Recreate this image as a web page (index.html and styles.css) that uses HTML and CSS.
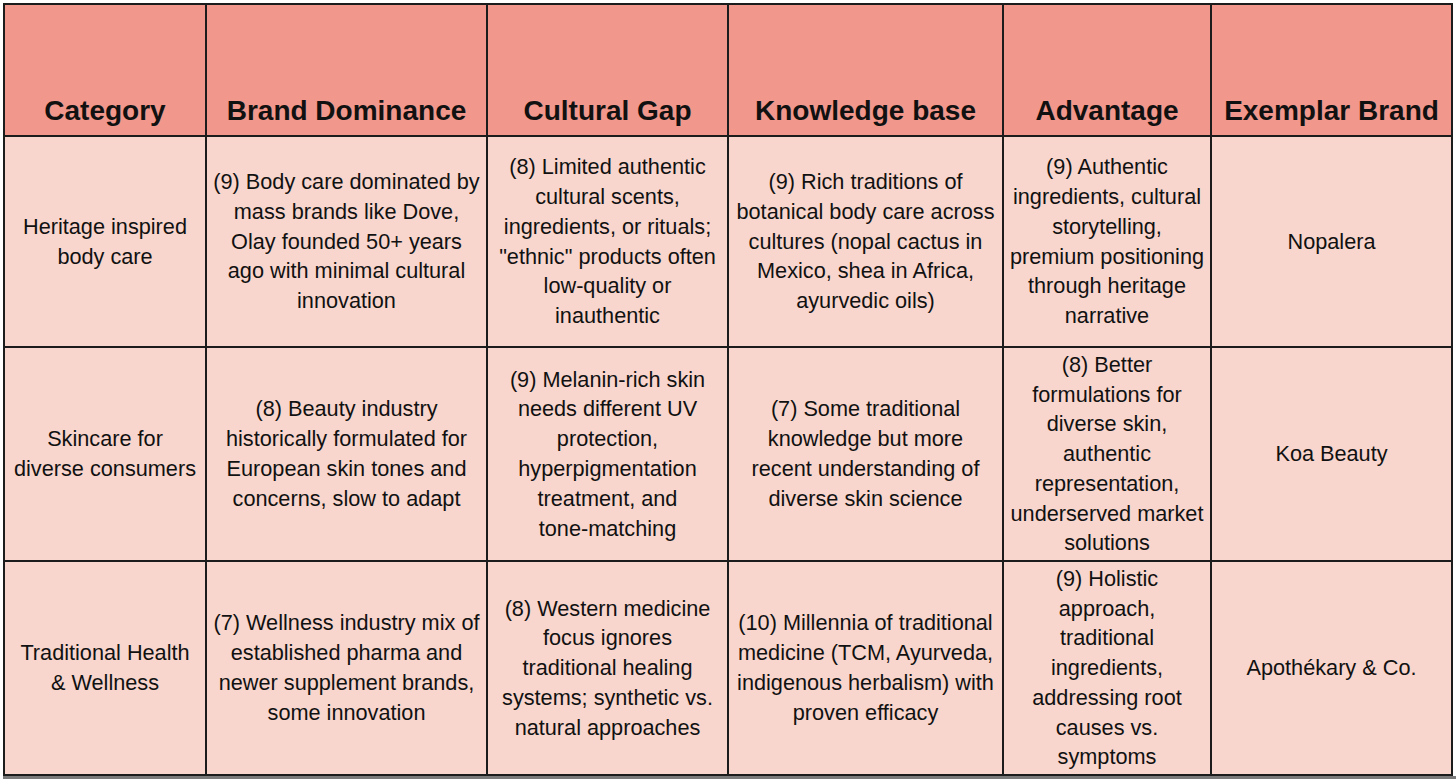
FILE: index.html
```html
<!DOCTYPE html>
<html>
<head>
<meta charset="utf-8">
<link rel="stylesheet" href="styles.css">
</head>
<body>
<div class="wrap">
<table class="grid">
<colgroup>
<col class="c1"><col class="c2"><col class="c3"><col class="c4"><col class="c5"><col class="c6">
</colgroup>
<thead>
<tr class="head">
<th>Category</th>
<th>Brand Dominance</th>
<th>Cultural Gap</th>
<th>Knowledge base</th>
<th>Advantage</th>
<th>Exemplar Brand</th>
</tr>
</thead>
<tbody>
<tr class="r1">
<td>Heritage inspired<br>body care</td>
<td>(9) Body care dominated by<br>mass brands like Dove,<br>Olay founded 50+ years<br>ago with minimal cultural<br>innovation</td>
<td>(8) Limited authentic<br>cultural scents,<br>ingredients, or rituals;<br>"ethnic" products often<br>low-quality or<br>inauthentic</td>
<td>(9) Rich traditions of<br>botanical body care across<br>cultures (nopal cactus in<br>Mexico, shea in Africa,<br>ayurvedic oils)</td>
<td>(9) Authentic<br>ingredients, cultural<br>storytelling,<br>premium positioning<br>through heritage<br>narrative</td>
<td>Nopalera</td>
</tr>
<tr class="r2">
<td>Skincare for<br>diverse consumers</td>
<td>(8) Beauty industry<br>historically formulated for<br>European skin tones and<br>concerns, slow to adapt</td>
<td>(9) Melanin-rich skin<br>needs different UV<br>protection,<br>hyperpigmentation<br>treatment, and<br>tone-matching</td>
<td>(7) Some traditional<br>knowledge but more<br>recent understanding of<br>diverse skin science</td>
<td>(8) Better<br>formulations for<br>diverse skin,<br>authentic<br>representation,<br>underserved market<br>solutions</td>
<td>Koa Beauty</td>
</tr>
<tr class="r3">
<td>Traditional Health<br>&amp; Wellness</td>
<td>(7) Wellness industry mix of<br>established pharma and<br>newer supplement brands,<br>some innovation</td>
<td>(8) Western medicine<br>focus ignores<br>traditional healing<br>systems; synthetic vs.<br>natural approaches</td>
<td>(10) Millennia of traditional<br>medicine (TCM, Ayurveda,<br>indigenous herbalism) with<br>proven efficacy</td>
<td>(9) Holistic<br>approach,<br>traditional<br>ingredients,<br>addressing root<br>causes vs.<br>symptoms</td>
<td>Apothékary &amp; Co.</td>
</tr>
</tbody>
</table>
<div class="bottom-rule"></div>
</div>
</body>
</html>
```
FILE: styles.css
```css
html, body {
  margin: 0;
  padding: 0;
  background: #ffffff;
}
.wrap {
  padding: 3px 0 0 3px;
}
.grid {
  table-layout: fixed;
  border-collapse: separate;
  border-spacing: 0;
  width: 1450px;
  border-left: 2px solid #1c1c1c;
  border-top: 2px solid #1c1c1c;
  font-family: "Liberation Sans", Arial, sans-serif;
  color: #111;
}
.c1 { width: 202px; }
.c2 { width: 281px; }
.c3 { width: 241px; }
.c4 { width: 275px; }
.c5 { width: 208px; }
.c6 { width: 241px; }
.grid th, .grid td {
  box-sizing: border-box;
  border-right: 2px solid #1c1c1c;
  border-bottom: 2px solid #1c1c1c;
  text-align: center;
  white-space: nowrap;
  overflow: hidden;
  padding: 0 2px;
}
.grid th {
  background: #f2978b;
  font-size: 28px;
  font-weight: bold;
  line-height: 34px;
  vertical-align: bottom;
  padding-bottom: 7px;
  height: 132px;
}
.grid td {
  background: #f8d6cd;
  font-size: 21.7px;
  line-height: 29.8px;
  vertical-align: middle;
}
.r1 td { height: 211px; }
.r2 td { height: 214px; }
.r3 td { height: 214px; }
.bottom-rule {
  height: 3px;
  background: #7a7a7a;
}
```
